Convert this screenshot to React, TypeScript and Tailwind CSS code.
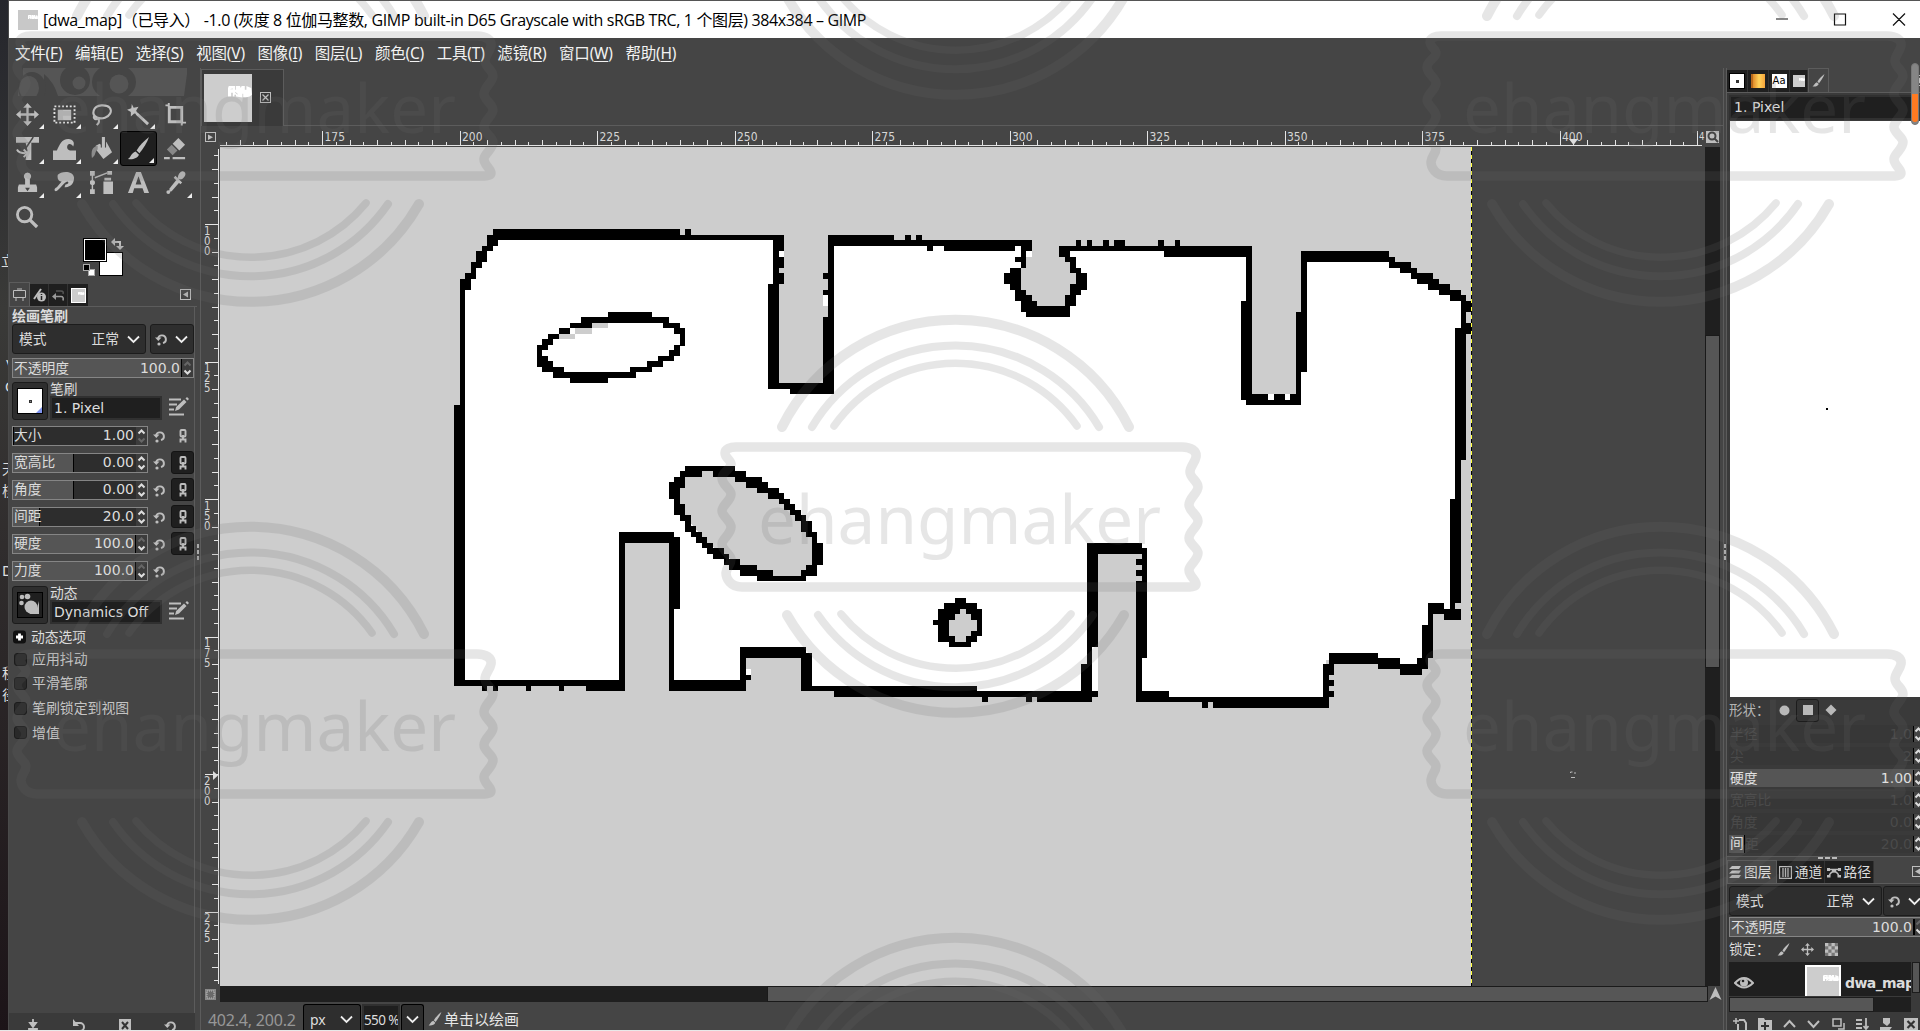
import React from "react";

type Rect = [number, number, number, number];

/* Map walls, as [x1, y1, x2, y2] runs, one list for each quarter of the map */
const NW: Rect[] = [
  [130,57,588,90],[600,57,615,75],[588,75,843,90],[115,75,142,108],[103,108,130,123],[88,123,115,156],[76,156,103,174],[76,174,88,190],[61,190,88,207],[49,207,76,240],[49,240,61,585],[34,585,61,900],
  [816,75,843,123],[816,75,831,222],[831,141,843,174],[831,190,843,222],[804,222,831,537],[804,519,965,537],[857,537,965,552],[938,321,965,552],[951,75,965,321],[938,190,951,207],[938,240,951,255],
  [951,75,1112,108],[951,90,1450,108],[1139,75,1154,90],[1166,75,1181,90],[1193,108,1208,123],[1235,108,1408,123],[1423,90,1450,123],[1423,108,1436,174],[1408,141,1436,156],[1396,174,1423,240],[1382,190,1396,222],[1408,240,1436,273],[1423,273,1463,288],[1423,288,1543,306],[1436,306,1543,321],
  [412,306,519,321],[345,321,561,339],[318,339,372,354],[546,339,588,354],[292,354,318,372],[573,354,600,372],[265,372,292,387],[250,387,277,405],[238,405,265,420],[238,420,250,438],[238,438,265,453],[238,453,277,471],[250,471,304,486],[277,486,480,504],[318,504,412,519],[588,372,600,405],[573,405,600,407],[573,405,588,420],[561,420,588,438],[534,438,573,453],[507,453,546,471],[465,471,519,486],
];
const NE: Rect[] = [
  [194,108,666,123],[194,108,220,141],[208,141,235,156],[220,156,235,174],[220,174,247,190],[235,190,262,240],[220,222,262,240],[220,240,247,255],[208,255,235,288],[100,255,127,273],[100,273,140,306],[113,288,220,321],
  [235,90,247,108],[262,90,274,108],[301,90,316,108],[328,90,355,108],[436,90,451,108],[478,90,490,108],[451,108,666,141],[652,108,666,552],[639,273,666,570],[652,552,786,585],[774,306,801,486],[774,486,786,585],[786,123,801,486],[786,123,1002,156],
  [1002,141,1017,174],[1002,156,1056,174],[1029,174,1071,190],[1056,190,1110,207],[1071,207,1125,222],[1098,222,1151,240],[1125,240,1178,255],[1151,255,1191,273],[1178,273,1203,306],[1178,306,1191,339],[1178,339,1203,372],[1164,354,1191,750],[1164,750,1178,870],
];
const SW: Rect[] = [
  [34,0,61,708],[34,690,453,708],[103,708,115,723],[130,708,142,723],[211,708,223,723],[292,708,304,723],[358,708,453,723],[439,246,453,723],[439,246,573,279],[561,261,588,477],[561,477,573,723],[561,690,750,723],[735,591,750,723],[735,591,897,624],[750,675,762,690],[884,609,911,723],[884,708,965,723],[965,708,1316,741],[1316,723,1568,741],[1328,741,1343,756],[1436,741,1450,756],[1463,741,1568,756],
  [600,48,723,63],[588,63,642,81],[669,63,750,81],[573,81,600,114],[723,81,789,96],[561,96,588,146],[750,96,804,114],[777,114,831,129],[573,146,588,162],[573,162,600,195],[588,195,615,213],[600,213,615,228],[600,228,627,246],[615,246,642,261],[627,261,654,279],[642,279,669,294],[654,294,696,312],[669,312,708,327],[696,327,735,345],[708,345,777,360],[735,360,816,378],[777,378,897,393],[804,129,843,146],[831,146,857,162],[843,162,870,180],[857,180,884,195],[870,195,897,213],[884,213,911,246],[897,246,924,261],[911,261,924,279],[911,279,938,345],[897,345,924,360],[884,360,924,378],
  [1262,444,1289,459],[1235,459,1316,477],[1220,477,1328,558],[1220,558,1316,575],[1208,510,1220,525],[1247,575,1301,591],
];
const SE: Rect[] = [
  [1164,-90,1178,27],[1151,27,1178,339],[1151,339,1164,357],[1137,357,1178,390],[1098,339,1137,372],[1098,372,1110,405],[1083,405,1110,504],[1071,504,1098,537],[1029,522,1083,555],[975,504,1029,537],[855,489,975,522],[840,522,867,555],[840,555,855,621],[855,570,867,588],[855,603,867,621],[571,621,855,654],[544,636,559,654],[463,621,855,636],[382,603,463,636],[382,504,397,636],[382,273,409,504],[397,174,409,273],[382,207,397,225],[382,240,397,258],[262,159,397,192],[262,159,289,471],[262,471,274,603],[247,522,274,636],[0,603,289,621],[140,621,274,636],[5,621,20,636],[113,621,127,636],
];

function Runs({ list, fill }: { list: Rect[]; fill: string }) {
  return <path fill={fill} d={list.map(([a, b, c, d]) => `M${a} ${b}H${c}V${d}H${a}Z`).join("")} />;
}

function MapDrawing() {
  const gray = "#cdcdcd";
  return (
    <svg className="absolute left-0 top-0" width="1485" height="839" viewBox="220 147 1485 839">
      <rect x="1471" y="147" width="234" height="839" fill="#454545" />
      <g transform="translate(440 210) scale(0.408163 0.333333)" shapeRendering="crispEdges">
        <path fill="#fff" d="M130 82L588 82L843 82L951 98L1450 98L1517 115L1989 115L2109 130L2325 140L2335 157L2483 262L2507 275V354L2495 360V870L2481 872V1205L2425 1195L2427 1245L2415 1250V1350L2380 1380L2310 1360L2190 1350H2170V1468H1786V1458H1705L1568 1452H1323L1000 1440L890 1432L750 1425L40 1420L45 585L55 585V240L62 223Z" />
        <Runs fill={gray} list={[[831,50,951,519],[1989,50,2109,552],[453,999,561,1480],[750,1344,884,1450],[1612,1032,1715,1490]]} />
        <path fill={gray} d="M1436 90H1517V141H1531V156H1543V190H1558V240H1543V255H1531V288H1463V273H1436V240H1423V174H1436Z" />
        <Runs fill="#000" list={NW} />
        <Runs fill="#fff" list={[[831,123,843,141],[938,255,951,288],[1436,123,1450,141]]} />
        <Runs fill={gray} list={[[372,339,412,354],[331,354,372,372],[292,372,331,387]]} />
        <g transform="translate(1323 0)">
          <Runs fill="#000" list={NE} />
          <Runs fill="#fff" list={[[706,552,720,570],[747,552,759,570]]} />
          <Runs fill={gray} list={[[1191,306,1203,339]]} />
        </g>
        <g transform="translate(0 720)">
          <path fill={gray} d="M600 81L642 63H669L723 81L777 110L831 146L897 213L911 246V345L884 378H816L735 345L654 279L588 180V114Z" />
          <Runs fill="#000" list={SW} />
          <Runs fill={gray} list={[[1274,477,1289,492],[1262,492,1301,510],[1247,510,1316,543],[1247,543,1301,558],[1262,558,1289,575]]} />
          <Runs fill="#fff" list={[[750,657,762,675],[897,591,911,609]]} />
        </g>
        <g transform="translate(1323 840)">
          <Runs fill="#fff" list={[[274,471,289,603]]} />
          <Runs fill={gray} list={[[382,192,397,273],[397,636,430,650]]} />
          <Runs fill="#000" list={SE} />
        </g>
      </g>
      <path d="M1471.5 147V986" stroke="#000" />
      <path d="M1471.5 147V986" stroke="#ffff3c" strokeDasharray="4 4" />
      <path d="M1570.500 773v-1h2M1576 773h-2M1571 777.500h4" stroke="#bbb" fill="none" />
    </svg>
  );
}

/* Translucent stamp, repeated over the whole window */
function Stamp({ x, y }: { x: number; y: number }) {
  return (
    <g transform={`translate(${x - 960} ${y - 517})`}>
      <g fill="none" stroke="#6a6a6a" strokeLinecap="round">
        <path strokeWidth="10" d="M782 427A194 194 0 0 1 1129 427M787 615A194 194 0 0 0 1124 615" />
        <path strokeWidth="8" d="M812 427A167 167 0 0 1 1099 427M818 615A167 167 0 0 0 1093 615" />
        <path strokeWidth="7.500" d="M834 426A149 149 0 0 1 1077 426M841 614A149 149 0 0 0 1071 614" />
        <path strokeWidth="9.500" strokeLinejoin="round" d="M736 447H1182C1191 447 1197 451 1196 457C1195 463 1190 466 1190 472C1190 478 1198 481 1198 487C1198 493 1189 498 1189 505C1189 511 1198 515 1198 521C1198 527 1189 531 1189 538C1189 544 1198 548 1198 553C1198 560 1189 565 1189 570C1189 576 1196 580 1196 584C1196 586 1193 587 1190 587H742C730 587 726 578 726 573C727 566 731 565 731 559C731 555 722 550 722 544C722 539 731 534 731 527C731 521 722 516 722 511C722 505 731 501 731 494C731 489 722 485 722 478C722 472 731 469 731 464C731 460 725 458 725 453C725 449 730 447 736 447Z" />
      </g>
      <text x="758" y="544" textLength="403" lengthAdjust="spacingAndGlyphs" fontSize="68" fontFamily="'Noto Sans','Open Sans',sans-serif" fill="#6a6a6a">ehangmaker</text>
    </g>
  );
}

function Watermark() {
  const spots = [[255,106],[255,724],[1665,106],[1665,724],[960,-101],[960,517],[960,1135]];
  return (
    <svg className="pointer-events-none absolute left-0 top-0" width="1920" height="1030" opacity="0.16">
      {spots.map(([x, y]) => <Stamp key={`${x}-${y}`} x={x} y={y} />)}
    </svg>
  );
}

const I = "#bebebe";

function HRuler() {
  const ticks = [];
  for (let k = 0; k <= 108; k++) {
    const u = 157.5 + k * 2.5;
    const x = 460 + (u - 200) * 5.5;
    if (x < 222 || x > 1703) continue;
    const h = u % 25 === 0 ? 15 : u % 5 === 0 ? 6 : 4;
    ticks.push(<path key={k} d={`M${Math.floor(x) + 0.5} ${146 - h}V146`} stroke="#e4e4e4" />);
  }
  return (
    <svg width="1485" height="21" viewBox="220 126 1485 21" className="shrink-0">
      <path d="M220 145.500H1702" stroke="#e4e4e4" />
      {ticks}
      {[175,200,225,250,275,300,325,350,375,400].map(n => (
        <text key={n} x={462 + (n - 200) * 5.5} y="140.500" fontSize="12" fill="#d6d6d6" fontFamily="'DejaVu Sans Condensed','DejaVu Sans',sans-serif" textLength="20.500" lengthAdjust="spacingAndGlyphs">{n}</text>
      ))}
      <text x="1699" y="140" fontSize="11" fill="#d6d6d6" fontFamily="DejaVu Sans" textLength="5.500" lengthAdjust="spacingAndGlyphs">4</text>
      <path d="M1569 139h9l-4.500 6z" fill="#ddd" />
    </svg>
  );
}

function VRuler() {
  const ticks = [];
  for (let k = 0; k <= 62; k++) {
    const u = 85 + k * 2.5;
    const y = 224.5 + (u - 100) * 5.5;
    if (y < 149 || y > 984) continue;
    const w = u % 25 === 0 ? 14 : u % 5 === 0 ? 7 : 5;
    ticks.push(<path key={k} d={`M${219 - w} ${Math.floor(y) + 0.5}H219`} stroke="#e4e4e4" />);
  }
  return (
    <svg width="20" height="839" viewBox="200 147 20 839" className="shrink-0">
      <path d="M218.500 149V984" stroke="#e4e4e4" />
      {ticks}
      {[100,125,150,175,200,225].map(n => String(n).split("").map((d, i) => (
        <text key={`${n}${i}`} x="204" y={234.5 + (n - 100) * 5.5 + i * 10} fontSize="11.500" fill="#d6d6d6" fontFamily="'DejaVu Sans'" textLength="6.500" lengthAdjust="spacingAndGlyphs">{d}</text>
      )))}
      <path d="M213 771v9l5-4.500z" fill="#ddd" />
    </svg>
  );
}

function Chevron({ w = 13 }: { w?: number }) {
  return <svg width={w} height="9" viewBox="0 0 13 9" className="shrink-0"><path d="M1 1.500L6.500 7L12 1.500" stroke="#eee" strokeWidth="1.800" fill="none" /></svg>;
}

function ResetIcon() {
  return (
    <svg width="14" height="14" viewBox="0 0 14 14" className="shrink-0">
      <path d="M3 6.500A4 4 0 1 1 8 11.200" stroke={I} strokeWidth="1.900" fill="none" />
      <path d="M0 5.500h6.500l-3.200 3.500z" fill={I} /><circle cx="4" cy="12" r="1.600" fill={I} />
    </svg>
  );
}

function ChainIcon() {
  return (
    <svg width="10" height="14" viewBox="0 0 10 14">
      <rect x="2.500" y="1" width="5" height="6.500" rx="1" fill="none" stroke={I} strokeWidth="1.900" />
      <path d="M5 6v4M2.500 13.500v-3h5v3" stroke={I} strokeWidth="1.900" fill="none" />
    </svg>
  );
}

function EditIcon() {
  return (
    <svg width="22" height="20" viewBox="0 0 22 20">
      <path d="M1 3.500h12M1 8.500h8M1 13.500h5M1 18.500h15" stroke={I} strokeWidth="2.200" />
      <path d="M7 15l1.200-4L16 3.500l2.500 2.500L11 13.500z" fill={I} /><path d="M17.500 2.500l1.500-1.500 2 2-1.500 1.500z" fill={I} />
    </svg>
  );
}

function BrushIcon({ size = 24 }: { size?: number }) {
  return (
    <svg width={size} height={size} viewBox="0 0 24 24" className="shrink-0">
      <path d="M23 0C18 4 13 9 10 14l3 3C17 12 21 6 23 0z" fill={I} /><path d="M9 15l3.500 3.500C11 22 6 24 1 23c3-2 3-6 8-8z" fill={I} />
    </svg>
  );
}

function MoveIcon({ size = 24 }: { size?: number }) {
  return (
    <svg width={size} height={size} viewBox="0 0 24 24">
      <path d="M12 3v18M3 12h18" stroke={I} strokeWidth="2.400" /><path d="M12 0l4.500 5h-9zM12 24l4.500-5h-9zM0 12l5-4.500v9zM24 12l-5-4.500v9z" fill={I} />
    </svg>
  );
}

function MenuButton() {
  return <svg width="11" height="11" viewBox="0 0 11 11"><rect x=".5" y=".5" width="10" height="10" fill="none" stroke={I} /><path d="M8 2.500v6L3 5.500z" fill={I} /></svg>;
}

/* Toolbox glyphs, in grid order */
const tools: React.ReactNode[] = [
  <MoveIcon />,
  <><rect x="1.500" y="3.500" width="21" height="17" fill="none" stroke="#e0e0e0" strokeWidth="2" strokeDasharray="2 2" /><rect x="5" y="7" width="14" height="11" fill={I} /></>,
  <path d="M7 15C1 12 3 3 12 2.500S23 7 21 11S13 17 8 15.500C5 13 3 14 4.500 16S8 16.500 8 14.500M8 16c2.500 2 1.500 5-1 7" fill="none" stroke={I} strokeWidth="2.200" />,
  <><path d="M10 11L22 22" stroke={I} strokeWidth="3" /><path d="M5 1l2 4 5-1-2.500 4L12 12l-4.500-1L4 14V9.500L0 7l4.500-1.500z" fill={I} /></>,
  <><path d="M5.500 4.500v15h13v-15z" fill="none" stroke={I} strokeWidth="3" /><path d="M1.500 2.500h3M5 0v4M18.500 19.500v4M18 20.500h5" stroke={I} strokeWidth="2" /></>,
  <><path d="M0 0h24v6H0z" fill={I} /><path d="M10 6h6v18h-6l1-7 1-3z" fill={I} /><path d="M18 0L10 12" stroke="#454545" strokeWidth="1.500" /><path d="M1 13q2 4 9 4M8 13l4 4-4 4" fill="none" stroke={I} strokeWidth="2" /></>,
  <path d="M0 24V14h4C7 8 9 2 16 2c5 0 7 4 5 8-1-3-5-4-6-1s1 5 4 5h5v10z" fill={I} />,
  <><path d="M6 9l4-2 3 2 4-4 6 11-9 7-7-9z" fill={I} /><path d="M2 22c-1-7 0-12 6-13v4c-3 2-2 6-5 8z" fill="#8c8c8c" /><path d="M14 0v11" stroke="#454545" strokeWidth="5.500" /><path d="M14 0v12" stroke={I} strokeWidth="3.200" /></>,
  <BrushIcon />,
  <><path d="M15 1l7 7-6 6-7-7z" fill={I} /><path d="M8 8l6 6-5 5-6-6z" fill="#888" /><path d="M0 22h6M9 22h13" stroke={I} strokeWidth="2.200" /></>,
  <><path d="M12 1.500a4 4 0 0 1 2.500 7v5.500H21l1 3v5H2v-5l1-3h6.500V8.500a4 4 0 0 1 2.500-7z" fill={I} /><path d="M9.500 17.500h5L12 21z" fill="#454545" /></>,
  <><path d="M5 4C8 0 21-1 22 7c0 8-6 10-10 10l1-3c3 0 4-2 2-3-3 0-9 10-12 10-2 0-2-3 1-4l5-6C6 11 4 8 5 4z" fill={I} /></>,
  <><path d="M2.500 2v20M5 7L18 2" stroke={I} strokeWidth="1.500" /><path d="M0 0h5v5H0zM0 19h5v5H0zM18 0h5v4h-5zM14 11h10v13H14zM15 7h7v3h-7z" fill={I} /><circle cx="2.500" cy="12" r="2.700" fill={I} /></>,
  <path d="M1 23L9.500 1h5L23 23h-5l-1.800-5H7.500L6 23zM9 14h6L12 5.500z" fill={I} fillRule="evenodd" />,
  <><path d="M13 9l3 3-8 9-3 1 1-4z" fill={I} /><path d="M11 6l7 7M15 8l5-5" stroke={I} strokeWidth="2.600" /><ellipse cx="18.500" cy="4.500" rx="3.200" ry="4.500" transform="rotate(35 18.500 4.500)" fill={I} /><circle cx="4.500" cy="22" r="2" fill={I} /></>,
  <><circle cx="9" cy="10" r="7.500" fill="none" stroke={I} strokeWidth="3" /><path d="M14 15l8 8" stroke={I} strokeWidth="3.500" /></>,
];
const hasMenu = [0, 1, 2, 3, 5, 6, 7, 8, 10, 11, 14];

function Toolbox() {
  return (
    <div className="mt-px grid h-[137px] w-[185px] shrink-0 grid-cols-5 grid-rows-4">
      {tools.map((t, i) => (
        <div key={i} className={`relative flex items-center justify-center ${i === 8 ? "rounded-[3px] border border-black bg-[#1f1f1f]" : ""}`}>
          <svg width="23" height="23" viewBox="0 0 24 24">{t}</svg>
          {hasMenu.includes(i) && <svg className="absolute bottom-[2px] right-[2px]" width="5" height="5"><path d="M5 0v5H0z" fill="#eee" /></svg>}
        </div>
      ))}
    </div>
  );
}

function Spin({ up = true, down = true }: { up?: boolean; down?: boolean }) {
  return (
    <svg width="9" height="16" viewBox="0 0 9 16" className="shrink-0">
      <path d="M1.500 5.500L4.500 2.500L7.500 5.500" stroke={up ? "#ddd" : "#666"} strokeWidth="2" fill="none" />
      <path d="M1.500 10.500L4.500 13.500L7.500 10.500" stroke={down ? "#ddd" : "#666"} strokeWidth="2" fill="none" />
    </svg>
  );
}

function Slider({ label, value, fill, up = true, down = true, wide = false }: { label: string; value: string; fill: number; up?: boolean; down?: boolean; wide?: boolean }) {
  return (
    <div className={`relative flex h-5 items-center whitespace-nowrap border border-[#858585] bg-[#2d2d2d] text-[13.75px] text-[#dcdcdc] ${wide ? "w-[182px]" : "w-[136px]"}`}>
      <div className="absolute inset-y-0 left-0 border-r border-black bg-[#555]" style={{ width: fill }} />
      <span className="relative ml-px flex-1">{label}</span>
      <span className="relative mr-[2px] text-[14px]">{value}</span>
      <div className="relative flex h-full w-[11px] items-center justify-center bg-[#3c3c3c]"><Spin up={up} down={down} /></div>
    </div>
  );
}

function SliderRow({ chain, ...p }: { label: string; value: string; fill: number; up?: boolean; down?: boolean; chain: 0 | 1 | 2 }) {
  return (
    <div className="flex h-[27px] items-center">
      <Slider {...p} />
      <div className="ml-[5px] w-[14px]"><ResetIcon /></div>
      {chain > 0 && <div className={`ml-1 flex h-[23px] w-[23px] items-center justify-center rounded-[3px] ${chain === 2 ? "border border-[#141414] bg-[#1f1f1f]" : ""}`}><ChainIcon /></div>}
    </div>
  );
}

function Entry({ label, text, children }: { label: string; text: string; children: React.ReactNode }) {
  return (
    <div className="flex h-[38px] w-[182px]">
      <div className="flex w-9 items-center justify-center rounded-[3px] border border-[#1c1c1c] bg-[#2e2e2e]">{children}</div>
      <div className="ml-[2px] w-[112px]">
        <div className="h-[14px] text-[13.75px] leading-[14px]">{label}</div>
        <div className="h-6 whitespace-nowrap border-2 border-[#303030] bg-[#1f1f1f] pl-[2px] text-[14px] leading-[21px]">{text}</div>
      </div>
      <div className="ml-[6px] mt-[14px]"><EditIcon /></div>
    </div>
  );
}

function MiniMap() {
  return <svg className="absolute left-[50%] top-[26%]" width="50%" height="24%" viewBox="0 0 30 12" preserveAspectRatio="none"><path d="M1 0h8v4h1V0h5l1 2 1-2h4v4h2V0l6 2 1 7-3 2-5 1h-3V8h-1v4l-8-1V9h-2v2H6V7H4v4H0V2z" fill="#fff" /><path d="M3 3l3-.5v1H3zM9 6l3 2v1l-3-2z" fill="#cdcdcd" /></svg>;
}

function Wilber() {
  return (
    <svg width="171" height="28" viewBox="16 68 171 28" className="ml-[7px] shrink-0">
      <path d="M18 68h169v6l-3 22H18z" fill="#555" />
      <path d="M16 68h7v8l-5 12v8h-2zM44 74q10 8 14 22H44z" fill="#454545" />
      <ellipse cx="32" cy="88" rx="14" ry="16" fill="#454545" /><ellipse cx="29" cy="88" rx="10" ry="12" fill="#555" />
      <circle cx="75" cy="80" r="15" fill="#454545" /><circle cx="79" cy="83" r="6.500" fill="#555" />
      <ellipse cx="114" cy="82" rx="22" ry="18" fill="#454545" /><circle cx="119" cy="84" r="9.500" fill="#555" />
    </svg>
  );
}

function Checkbox({ label }: { label: string }) {
  return (
    <div className="flex h-5 items-center text-[13.9px] text-[#c4c4c4]">
      <div className="mr-[5px] h-[13px] w-[13px] rounded-[3px] border border-[#1c1c1c] bg-[#292929]" />{label}
    </div>
  );
}

function LeftDock() {
  return (
    <div className="flex h-full w-[188px] flex-col overflow-hidden">
      <Wilber />
      <Toolbox />
      <div className="relative ml-[74px] mt-1 h-[45px] w-10 shrink-0">
        <div className="absolute left-4 top-[14px] h-6 w-6 border border-black bg-white" />
        <div className="absolute left-0 top-0 h-6 w-6 border border-black bg-black outline-1 -outline-offset-2 outline-white" />
        <svg className="absolute left-7 top-0" width="13" height="13"><path d="M3 4h6v6" stroke={I} strokeWidth="2" fill="none" /><path d="M0 4l4-4v8zM5 8h8l-4 4z" fill={I} /></svg>
        <div className="absolute left-[5px] top-[31px] h-[7px] w-[7px] border border-[#aaa] bg-white" />
        <div className="absolute left-0 top-[26px] h-[7px] w-[7px] border border-[#aaa] bg-black" />
      </div>
      <div className="flex h-[24px] shrink-0 items-end border-b border-[#5c5c5c]">
        <div className="flex h-6 w-[21px] items-center justify-center border border-b-0 border-[#5c5c5c] bg-[#454545]">
          <svg width="15" height="14" viewBox="0 0 15 14"><path d="M1.500 2.500h12v7h-12zM4 10v3M11 10v3M5 1h5" stroke={I} fill="none" /></svg>
        </div>
        <div className="flex h-[22px] w-[19px] items-center justify-center border-r border-[#333] bg-[#1f1f1f]"><svg width="13" height="14" viewBox="0 0 13 14"><path d="M1 11L8 1" stroke={I} strokeWidth="2" /><circle cx="8.500" cy="9" r="4.500" fill={I} /><path d="M8.500 6v1M8.500 8v4" stroke="#222" strokeWidth="1.500" /></svg></div>
        <div className="flex h-[22px] w-[19px] items-center justify-center border-r border-[#333] bg-[#1f1f1f]"><svg width="13" height="13" viewBox="0 0 13 13"><path d="M3 7.500h6q3 0 2 4" stroke="#999" strokeWidth="1.600" fill="none" /><path d="M0 7.500l4-3.500v7z" fill="#999" /><path d="M4 2h5q3 0 2 3" stroke="#555" strokeWidth="1.500" fill="none" /></svg></div>
        <div className="flex h-[22px] w-[20px] items-center justify-center bg-[#1f1f1f]"><div className="relative h-[15px] w-[15px] border border-white bg-[#cdcdcd]"><MiniMap /></div></div>
        <div className="mb-[6px] ml-[92px]"><MenuButton /></div>
      </div>
      <div className="flex h-[706px] w-[186px] shrink-0 flex-col border-r border-[#5c5c5c] pl-[3px] text-[#dcdcdc]">
        <div className="mt-px h-[16px] text-[14px] font-bold leading-[17px]">绘画笔刷</div>
        <div className="flex h-[30px] w-[182px] gap-1 text-[13.75px]">
          <div className="flex w-[134px] items-center rounded-[3px] border border-[#1c1c1c] bg-[#2e2e2e] pl-[6px] pr-[5px]"><span className="flex-1">模式</span><span className="mr-2">正常</span><Chevron /></div>
          <div className="flex w-11 items-center justify-between rounded-[3px] border border-[#1c1c1c] bg-[#2e2e2e] pl-[4px] pr-[5px]"><ResetIcon /><Chevron /></div>
        </div>
        <div className="mt-[4px]"><Slider wide label="不透明度" value="100.0" fill={169} up={false} /></div>
        <div className="mt-[4px]">
          <Entry label="笔刷" text="1. Pixel">
            <div className="relative flex h-[26px] w-[26px] items-center justify-center border border-black bg-white"><div className="h-[3px] w-[3px] border border-[#333] bg-[#888]" /><svg className="absolute bottom-0 right-0" width="6" height="6"><path d="M6 0v6H0z" fill="#8094ee" /></svg></div>
          </Entry>
        </div>
        <div className="mt-[2px]">
          <SliderRow label="大小" value="1.00" fill={0} down={false} chain={1} />
          <SliderRow label="宽高比" value="0.00" fill={61} chain={2} />
          <SliderRow label="角度" value="0.00" fill={61} chain={2} />
          <SliderRow label="间距" value="20.0" fill={27} chain={2} />
          <SliderRow label="硬度" value="100.0" fill={123} up={false} chain={2} />
          <SliderRow label="力度" value="100.0" fill={123} up={false} chain={0} />
        </div>
        <div className="mt-[2px]">
          <Entry label="动态" text="Dynamics Off">
            <svg width="26" height="26" viewBox="0 0 26 26"><rect x=".5" y=".5" width="25" height="25" fill="#1f1f1f" stroke="#000" /><circle cx="5" cy="5" r="2.300" fill={I} /><circle cx="10.500" cy="4.500" r="2.800" fill={I} /><circle cx="4.500" cy="11" r="2.300" fill={I} /><circle cx="14" cy="15" r="6.500" fill={I} /><path d="M22 9v13H12L20 16z" fill={I} /></svg>
          </Entry>
        </div>
        <div className="mt-[2px] flex h-[22px] items-center text-[13.75px]">
          <svg width="14" height="14" className="ml-px mr-1"><rect width="13" height="13" y=".5" rx="3" fill="#111" /><path d="M3 7h7M6.500 3.500v7" stroke="#fff" strokeWidth="2.800" /></svg>动态选项
        </div>
        <div className="ml-[2px] mt-px flex h-[94px] flex-col justify-between">
          <Checkbox label="应用抖动" /><Checkbox label="平滑笔廓" /><Checkbox label="笔刷锁定到视图" /><Checkbox label="增值" />
        </div>
      </div>
      <div className="flex h-[18px] w-[186px] shrink-0 justify-between overflow-hidden bg-[#3a3a3a] pl-[17px] pr-[17px] pt-[6px]">
        <svg width="14" height="14"><path d="M7 0v6M4 4h6L7 8zM3 14v-4h8v4" stroke={I} strokeWidth="1.800" fill={I} /></svg>
        <svg width="14" height="14"><path d="M3 4h5a4 4 0 0 1 0 8H4" stroke={I} strokeWidth="2" fill="none" /><path d="M1 0v7h6z" fill={I} /></svg>
        <svg width="14" height="14"><rect x="1" width="12" height="13" fill={I} /><path d="M4 3l6 7M10 3l-6 7" stroke="#333" strokeWidth="2" /></svg>
        <ResetIcon />
      </div>
    </div>
  );
}

function ImageWindow() {
  return (
    <div className="flex h-full w-[1524px] flex-col border-l border-[#5c5c5c]">
      <div className="flex h-[58px] shrink-0 items-end">
        <div className="flex h-[57px] w-[83px] items-start border border-b-0 border-[#5c5c5c] bg-[#3a3a3a] pl-[2px] pt-1">
          <div className="relative h-[48px] w-[48px] bg-[#cdcdcd]"><MiniMap /></div>
          <svg className="ml-2 mt-[18px]" width="12" height="12"><rect x=".5" y=".5" width="10" height="10" fill="none" stroke={I} /><path d="M2.500 2.500l6 6M8.500 2.500l-6 6" stroke={I} strokeWidth="1.300" /></svg>
        </div>
        <div className="h-px flex-1 bg-[#5c5c5c]" />
      </div>
      <div className="flex h-[21px] shrink-0">
        <svg width="19" height="21"><rect x="4.500" y="6.500" width="10" height="9" fill="none" stroke={I} /><path d="M7 8.500v5.500l5-2.700z" fill={I} /></svg>
        <HRuler />
        <svg width="15" height="21" className="shrink-0"><rect x="1" y="5" width="13" height="12" fill={I} /><circle cx="7" cy="10" r="3.500" fill="none" stroke="#444" strokeWidth="2" /><path d="M9.500 12.500l3.500 3.500" stroke="#444" strokeWidth="2" /></svg>
      </div>
      <div className="flex h-[839px] shrink-0">
        <div className="-ml-px"><VRuler /></div>
        <div className="relative h-full w-[1485px] bg-[#cdcdcd]"><MapDrawing /></div>
        <div className="w-[15px] bg-[#1f1f1f] pt-[188px]"><div className="h-[333px] border border-[#1a1a1a] bg-[#565656]" /></div>
      </div>
      <div className="flex h-[16px] shrink-0">
        <svg width="19" height="16"><rect x="4" y="3" width="11" height="11" fill="#888" /><rect x="6" y="5" width="7" height="7" fill="#6a6a6a" stroke="#bbb" strokeDasharray="1 1" /></svg>
        <div className="w-[1488px] bg-[#1f1f1f] pl-[547px]"><div className="h-full border border-[#1a1a1a] bg-[#565656]" /></div>
        <svg width="15" height="16"><path d="M7.500 1l6 13-6-3.500L1.500 14z" fill={I} /></svg>
      </div>
      <div className="flex h-[28px] items-end pl-[7px] text-[16px] text-[#979797]">
        <span className="h-[28px] w-[95px] whitespace-nowrap font-['Noto_Sans'] text-[16px] leading-[37px] tracking-[-0.2px]">402.4, 200.2</span>
        <div className="flex h-[26px] w-[58px] items-center justify-between rounded-t-[3px] border border-b-0 border-black bg-[#2e2e2e] pl-[6px] pr-[7px] pt-1 font-['Noto_Sans','Noto_Sans_CJK_SC'] text-[14px] text-[#ddd]">px<Chevron /></div>
        <div className="ml-px flex h-[26px] w-[38px] items-center overflow-hidden whitespace-nowrap border-2 border-b-0 border-[#303030] bg-[#1f1f1f] pt-1 font-['Noto_Sans','Noto_Sans_CJK_SC'] text-[13.5px] tracking-[-0.6px] text-[#ddd]">550 %</div>
        <div className="ml-px flex h-[26px] w-[23px] items-center justify-center rounded-t-[3px] border border-b-0 border-black bg-[#2e2e2e] pt-1"><Chevron /></div>
        <div className="mb-[4px] ml-1"><BrushIcon size={14} /></div>
        <span className="ml-[2px] h-[28px] text-[15px] leading-[37px] text-[#e6e6e6]">单击以绘画</span>
      </div>
    </div>
  );
}

function DimRow({ label, value, on = false, part = "" }: { label: string; value: string; on?: boolean; part?: string }) {
  return (
    <div className={`mb-1 flex h-[18px] shrink-0 items-center whitespace-nowrap text-[13.75px] ${on ? "bg-[#555] text-[#e0e0e0]" : "bg-[#373737] text-[#4a4a4a]"}`}>
      {part && <span className="h-full border-r border-black bg-[#555] pl-[1px] leading-[17px] text-[#e0e0e0]">{part}</span>}
      <span className={part ? "flex-1" : "flex-1 pl-px"}>{label}</span>
      <span className="mr-px text-[14px]">{value}</span>
      <div className="flex w-[7px] shrink-0 overflow-hidden border-l border-black bg-[#454545]"><Spin /></div>
    </div>
  );
}

function RightDock() {
  const tab = "flex h-[22px] items-center justify-center border-r border-[#333] bg-[#1f1f1f]";
  return (
    <div className="flex h-full w-[194px] flex-col overflow-hidden border-l border-[#5c5c5c] text-[#dcdcdc]">
      <div className="flex h-[25px] shrink-0 items-end border-b border-[#5c5c5c]">
        <div className={`${tab} w-[21px]`}><div className="flex h-4 w-4 items-center justify-center border border-black bg-white"><div className="h-[3px] w-[3px] bg-[#333]" /></div></div>
        <div className={`${tab} w-[21px]`}><div className="h-[14px] w-[14px] border-l-2 border-[#b86a1c] bg-linear-to-r from-[#e08b28] via-[#ffd35a] to-[#f5a33a]" /></div>
        <div className={`${tab} w-[21px]`}><div className="h-[14px] w-[15px] bg-white text-center text-[10px] leading-[14px] text-black">Aa</div></div>
        <div className={`${tab} w-[18px]`}><div className="relative h-3 w-3 bg-[#cdcdcd]"><MiniMap /></div></div>
        <div className="flex h-6 w-[21px] items-center justify-center border border-b-0 border-[#5c5c5c]"><BrushIcon size={13} /></div>
        <div className="mb-[6px] ml-[83px] w-2 shrink-0 overflow-hidden"><MenuButton /></div>
      </div>
      <div className="flex h-[764px] shrink-0 flex-col overflow-hidden border-b border-[#5c5c5c] bg-[#3a3a3a] pl-[2px]">
        <div className="mb-[1px] mt-[2px] h-[25px] w-[184px] shrink-0 border-2 border-[#303030] bg-[#1f1f1f] pl-[3px] text-[14px] leading-[21px]">1. Pixel</div>
        <div className="ml-px flex h-[576px] shrink-0 items-center justify-center bg-white pl-1"><div className="h-[2px] w-[2px] bg-black" /></div>
        <div className="mb-[3px] mt-[1px] flex h-6 shrink-0 items-center text-[13.5px] text-[#b4b4b4]">
          <span className="w-[50px]">形状：</span>
          <svg width="11" height="11"><circle cx="5.500" cy="5.500" r="5" fill="#b8b8b8" /></svg>
          <div className="mx-[6px] flex h-[23px] w-[23px] items-center justify-center rounded-[3px] border border-[#1c1c1c] bg-[#343434]"><div className="h-[10px] w-[10px] bg-[#b8b8b8]" /></div>
          <svg width="12" height="12"><path d="M6 .5L11.500 6 6 11.500.5 6z" fill="#b8b8b8" /></svg>
        </div>
        <DimRow label="半径" value="1.0" /><DimRow label="尖" value="2" /><DimRow on label="硬度" value="1.00" /><DimRow label="宽高比" value="1.0" /><DimRow label="角度" value="0.0" /><DimRow part="间" label="距" value="20.0" />
      </div>
      <div className="flex h-[4px] shrink-0 items-start justify-center gap-[2px] pl-2"><i className="h-[2px] w-[5px] bg-[#bbb]" /><i className="h-[2px] w-[5px] bg-[#bbb]" /><i className="h-[2px] w-[5px] bg-[#bbb]" /></div>
      <div className="flex h-[23px] shrink-0 items-end whitespace-nowrap border-b border-[#5c5c5c] text-[13.75px]">
        <div className="flex h-[23px] w-[50px] items-center gap-[3px] border border-b-0 border-[#5c5c5c] bg-[#454545] pl-px"><svg width="12" height="14"><path d="M3 1h9l-2 3H0zM3 5.500h9l-2 3H0zM3 10h9l-2 3H0z" fill={I} /></svg>图层</div>
        <div className={`${tab} w-[49px] gap-[3px]`}><svg width="13" height="13"><path d="M.5.500h12v12H.500zM4 2v9M6.500 2v9M9 2v9" stroke={I} fill="none" strokeWidth="1.300" /></svg>通道</div>
        <div className={`${tab} w-[49px] gap-[2px]`}><svg width="14" height="13"><path d="M0 3.500h14M2 10.500q1.500-5 5-5t5 5" stroke={I} strokeWidth="1.400" fill="none" /><path d="M5 3h4v3.500H5zM0 2h3v3H0zM11 2h3v3h-3zM0 9h3.500v2.500H0zM10.500 9H14v2.500h-3.500z" fill={I} /></svg>路径</div>
        <div className="mb-[6px] ml-[38px] w-2 shrink-0 overflow-hidden"><MenuButton /></div>
      </div>
      <div className="flex flex-1 flex-col bg-[#3a3a3a] pl-[2px]">
        <div className="mt-[2px] flex h-[30px] gap-px text-[13.75px]">
          <div className="flex w-[153px] shrink-0 items-center rounded-[3px] border border-[#1c1c1c] bg-[#2e2e2e] px-[6px]"><span className="flex-1">模式</span><span className="mr-2">正常</span><Chevron /></div>
          <div className="flex w-11 shrink-0 items-center gap-[6px] rounded-[3px] border border-[#1c1c1c] bg-[#2e2e2e] pl-[4px]"><ResetIcon /><Chevron /></div>
        </div>
        <div className="mt-px flex h-5 items-center border border-r-0 border-[#858585] bg-[#555] text-[13.75px]"><span className="flex-1 pl-px">不透明度</span><span className="mr-px text-[14px]">100.0</span><div className="w-[7px] shrink-0 overflow-hidden border-l-2 border-black bg-[#3c3c3c]"><Spin up={false} /></div></div>
        <div className="flex h-[25px] items-center text-[13.5px]"><span className="w-[48px]">锁定：</span><BrushIcon size={13} /><span className="ml-[11px]"><MoveIcon size={13} /></span>
          <svg className="ml-[11px]" width="13" height="13"><rect width="13" height="13" fill="#777" /><path d="M0 0h3.300v3.300H0zM6.500 0h3.300v3.300H6.500zM3.300 3.300h3.200v3.200H3.300zM9.800 3.300H13v3.200H9.800zM0 6.500h3.300v3.300H0zM6.500 6.500h3.300v3.300H6.500zM3.300 9.800h3.200V13H3.300zM9.800 9.800H13V13H9.800z" fill={I} /></svg>
        </div>
        <div className="flex h-[34px] gap-px">
          <div className="flex w-[182px] items-end overflow-hidden bg-[#1f1f1f]">
            <svg className="mb-[6px] ml-[5px] shrink-0" width="20" height="14" viewBox="0 0 20 14"><path d="M1 7Q10-3 19 7Q10 16 1 7z" fill="none" stroke={I} strokeWidth="2" /><circle cx="10" cy="6.500" r="4" fill={I} /><circle cx="9" cy="5" r="1.300" fill="#222" /></svg>
            <div className="relative ml-[51px] h-[31px] w-[36px] shrink-0 border-2 border-b-0 border-white bg-[#cdcdcd]"><MiniMap /></div>
            <span className="mb-[2px] ml-[4px] whitespace-nowrap text-[14px] font-bold tracking-[-0.6px]">dwa_map</span>
          </div>
          <div className="h-[31px] flex-1 border border-[#1c1c1c] bg-[#565656]" />
        </div>
        <div className="mt-px h-[15px] w-[182px] bg-[#1f1f1f]"><div className="h-full w-[145px] border border-[#1c1c1c] bg-[#565656]" /></div>
        <div className="flex h-[18px] items-start justify-between overflow-hidden pl-[4px] pr-[2px] pt-[6px]">
          <svg width="14" height="13"><path d="M6 2h5l2 3v9M5 6v8" stroke={I} strokeWidth="2" fill="none" /><path d="M3 0v6M0 3h6" stroke={I} strokeWidth="1.500" /></svg>
          <svg width="14" height="13"><path d="M0 0h6l1 2h7v12H0z" fill={I} /><path d="M7 4v8M3 8h8" stroke="#333" strokeWidth="2" /></svg>
          <svg width="13" height="13"><path d="M1 9l5.500-6L12 9" stroke={I} strokeWidth="2" fill="none" /></svg>
          <svg width="13" height="13"><path d="M1 3l5.500 6L12 3" stroke={I} strokeWidth="2" fill="none" /></svg>
          <svg width="13" height="13"><path d="M1 1h8v7H1zM6 11h6V5" stroke={I} strokeWidth="1.500" fill="none" /></svg>
          <svg width="13" height="13"><path d="M0 2h6M0 6h6M0 10h6M10 0v10M7.500 8l2.500 3 2.500-3" stroke={I} strokeWidth="1.800" fill="none" /></svg>
          <svg width="13" height="13"><path d="M3 0h7v5l-3 3-4-3zM0 9h12l-3 4H0z" fill={I} /></svg>
          <svg width="14" height="13"><rect width="14" height="13" fill={I} /><path d="M3.500 3l7 7M10.500 3l-7 7" stroke="#333" strokeWidth="2.200" /></svg>
        </div>
      </div>
    </div>
  );
}

const menus: [string, string][] = [["文件","F"],["编辑","E"],["选择","S"],["视图","V"],["图像","I"],["图层","L"],["颜色","C"],["工具","T"],["滤镜","R"],["窗口","W"],["帮助","H"]];

export default function App() {
  return (
    <div className="relative flex h-[1031px] w-[1920px] overflow-hidden border-b border-[#e8e8e8] bg-[#454545] font-['DejaVu_Sans','Noto_Sans_CJK_SC',sans-serif]">
      <div className="relative w-[9px] shrink-0 overflow-hidden border-r border-[#4a4a4a] bg-linear-to-b from-[#25262c] via-[#3a3a38] via-30% to-[#1c1418] text-[14px] leading-[22px] text-[#ddd]">
        <div className="mt-[250px] ml-[1px]">立</div><div className="mt-[82px] ml-[6px]">V</div><div className="ml-[5px]">C</div><div className="mt-[60px] ml-[2px]">天</div><div className="ml-[2px]">核</div><div className="mt-[58px] ml-[2px]">D</div><div className="mt-[80px] ml-[2px]">程</div><div className="ml-[2px]">径</div>
      </div>
      <div className="flex w-[1911px] flex-col">
        <div className="flex h-[38px] shrink-0 items-center border-t border-[#555] bg-white pl-[9px] text-black">
          <div className="relative h-[20px] w-[20px] bg-[#c8c8c8]"><MiniMap /></div>
          <div className="ml-[5px] flex-1 whitespace-nowrap font-['Open_Sans','Noto_Sans_CJK_SC'] text-[16px] tracking-[-0.365px]">[dwa_map]（已导入） -1.0 (灰度 8 位伽马整数, GIMP built-in D65 Grayscale with sRGB TRC, 1 个图层) 384x384 – GIMP</div>
          <svg width="160" height="20" viewBox="1760 9.500 160 20" className="shrink-0"><path d="M1776 18.500h12M1834.500 13.500h11v11h-11zM1893 13l12 12M1905 13l-12 12" stroke="#111" strokeWidth="1.200" fill="none" /></svg>
        </div>
        <div className="flex h-[30px] shrink-0 items-center gap-[12.7px] pl-[6px] pt-[2px] font-['Noto_Sans','Noto_Sans_CJK_SC'] text-[15.5px] tracking-[-0.2px] text-[#f2f2f2]">
          {menus.map(([a, b]) => <span key={a} className="whitespace-nowrap">{a}(<span className="underline underline-offset-2">{b}</span>)</span>)}
        </div>
        <div className="flex h-[962px] items-stretch">
          <LeftDock />
          <div className="flex w-[3px] flex-col items-center justify-center gap-[2px] pt-[6px]"><i className="h-[4px] w-[2px] bg-[#aaa]" /><i className="h-[4px] w-[2px] bg-[#aaa]" /><i className="h-[4px] w-[2px] bg-[#aaa]" /></div>
          <ImageWindow />
          <div className="flex w-[3px] flex-col items-center justify-center gap-[2px] border-l border-[#5c5c5c] pt-[6px]"><i className="h-[4px] w-[2px] bg-[#aaa]" /><i className="h-[4px] w-[2px] bg-[#aaa]" /><i className="h-[4px] w-[2px] bg-[#aaa]" /></div>
          <RightDock />
        </div>
      </div>
      <Watermark />
      <div className="absolute left-[1911px] top-[63px] h-[62px] w-[8px] rounded-full border border-[#777] bg-[#858585] pt-[30px]"><div className="h-[28px] rounded-b-full bg-[#ff7a22]" /></div>
    </div>
  );
}
